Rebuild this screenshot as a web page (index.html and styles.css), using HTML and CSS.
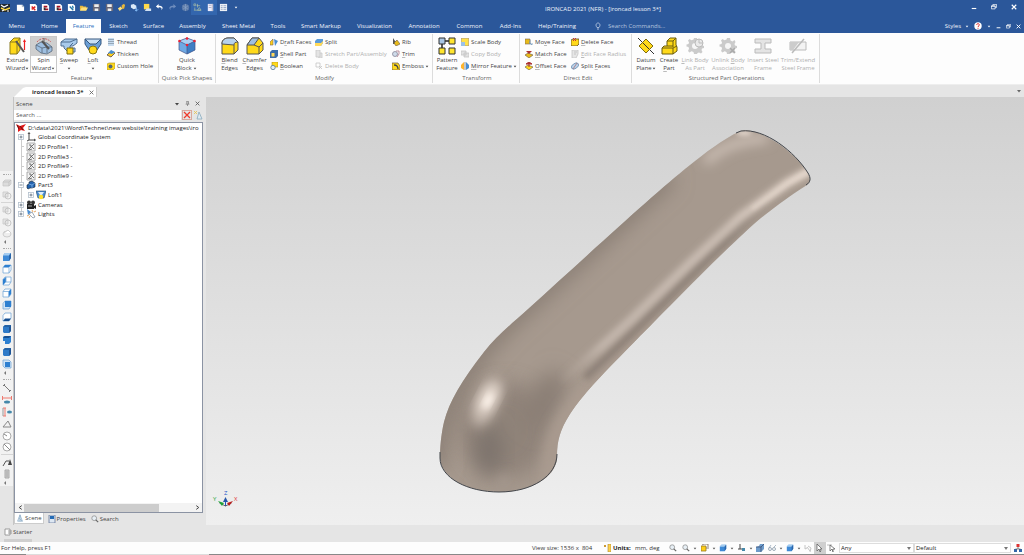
FILE: index.html
```html
<!DOCTYPE html>
<html lang="en">
<head>
<meta charset="utf-8">
<title>IRONCAD 2021 (NFR) - [ironcad lesson 3*]</title>
<link rel="stylesheet" href="styles.css">
</head>
<body>
<svg class="defs" aria-hidden="true">
  <symbol id="page" viewBox="0 0 10 10"><path d="M1 2h6l2 2v5H1z" fill="#fff"/><path d="M7 2v2h2" fill="none" stroke="#9ab"/></symbol>
  <symbol id="page-red" viewBox="0 0 10 10"><path d="M1 1h6l2 2v6H1z" fill="#fff"/><path d="M3 4l4 4M7 4L3 7" stroke="#d22" stroke-width="1.6"/></symbol>
  <symbol id="page-dark" viewBox="0 0 10 10"><path d="M1 1h6l2 2v6H1z" fill="#fff"/><path d="M3 3h4v2H3zM4 6h4v2H4z" fill="#a12"/><path d="M3 5h2v3H3z" fill="#333"/></symbol>
  <symbol id="page-blue" viewBox="0 0 10 10"><path d="M1 1h6l2 2v6H1z" fill="#fff"/><path d="M3 4l4 4M6 3l1 3" stroke="#27a" stroke-width="1.5"/></symbol>
  <symbol id="folder" viewBox="0 0 10 10"><path d="M1 3h3l1 1h3v4H1z" fill="#e8b73a"/><path d="M3 5h7L8 8.500H1z" fill="#ffe07a"/></symbol>
  <symbol id="disk" viewBox="0 0 10 10"><path d="M1 1h8v8H1z" fill="#667"/><path d="M2.500 1.500h5v3h-5zM3 6h4v3H3z" fill="#eee"/></symbol>
  <symbol id="cube-s" viewBox="0 0 10 10"><path d="M1 3.500L3 1h6v5L7 9H1z" fill="#3f8ad6"/><path d="M1 3.500L3 1h6L7 3.500z" fill="#a5ccf0"/><path d="M7 3.500L9 1v5L7 9z" fill="#2a66aa"/></symbol>
  <symbol id="cube-iso" viewBox="0 0 10 10"><path d="M1 3L3 1h6v6L7 9H2L1 8z" fill="#2f7ac8"/><path d="M1 3L3 1h6L7 3z" fill="#2462a6"/><path d="M7 3L9 1v6L7 9z" fill="#1f5596"/></symbol>
  <symbol id="cube-top" viewBox="0 0 10 10"><path d="M1 3.500L3 1h6v5L7 9H1z" fill="#fff" stroke="#79a9d8" stroke-width=".8"/><path d="M1 3.500L3 1h6L7 3.500z" fill="#2d7fd0"/><path d="M7 3.500V9" stroke="#79a9d8" stroke-width=".8"/></symbol>
  <symbol id="cube-left" viewBox="0 0 10 10"><path d="M1 3.500L3 1h6v5L7 9H1z" fill="#fff" stroke="#79a9d8" stroke-width=".8"/><path d="M1 3.500L4 1v5L1 9z" fill="#2d7fd0"/><path d="M4 1v5h5" fill="none" stroke="#79a9d8" stroke-width=".8"/></symbol>
  <symbol id="cube-right" viewBox="0 0 10 10"><path d="M1 3.500L3 1h6v5L7 9H1z" fill="#fff" stroke="#79a9d8" stroke-width=".8"/><path d="M6.500 3.500L9 1v5L6.500 9z" fill="#2d7fd0"/><path d="M1 3.500h6" stroke="#79a9d8" stroke-width=".8"/></symbol>
  <symbol id="cube-back" viewBox="0 0 10 10"><path d="M1 3.500L3 1h6v5L7 9H1z" fill="#cfe3f6" stroke="#79a9d8" stroke-width=".8"/><path d="M3 1h6v6H3z" fill="#2d7fd0"/></symbol>
  <symbol id="cube-bottom" viewBox="0 0 10 10"><path d="M1 3.500L3 1h6v5L7 9H1z" fill="#fff" stroke="#79a9d8" stroke-width=".8"/><path d="M1 9l2-2.500h6L7 9z" fill="#174f91"/></symbol>
  <symbol id="cube-grey" viewBox="0 0 10 10"><path d="M1 4l2-2h6v4L7 8H1z" fill="#dcdcdc" stroke="#c4c4c4" stroke-width=".7"/><path d="M1 4h6v4M7 4l2-2" fill="none" stroke="#bbb" stroke-width=".7"/></symbol>
  <symbol id="rings" viewBox="0 0 10 10"><path d="M1 2h5v5H1z" fill="#e4e4e4" stroke="#c8c8c8" stroke-width=".8"/><circle cx="6" cy="6" r="3" fill="none" stroke="#bdbdbd" stroke-width=".8"/></symbol>
  <symbol id="cyl-grey" viewBox="0 0 10 10"><ellipse cx="5" cy="6" rx="4" ry="3" fill="#eee" stroke="#c4c4c4" stroke-width=".8"/><path d="M2 5l4-3 3 3" fill="#fff" stroke="#c4c4c4" stroke-width=".8"/></symbol>
  <symbol id="down" viewBox="0 0 6 4"><path d="M1 1h4L3 3.500z" fill="currentColor"/></symbol>
  <symbol id="profile" viewBox="0 0 10 10"><path d="M1 1h8v8H1z" fill="#f2f2f2" stroke="#999" stroke-width=".8"/><path d="M2 8l6-6M3 3h2v2M6 7l-3 1M6 5l2 2" fill="none" stroke="#555" stroke-width=".8"/></symbol>
  <symbol id="plus" viewBox="0 0 6 6"><rect x=".5" y=".5" width="5" height="5" fill="#fff" stroke="#b4c0cc" stroke-width=".8"/><path d="M1.500 3h3M3 1.500v3" stroke="#567" stroke-width=".8"/></symbol>
  <symbol id="minus" viewBox="0 0 6 6"><rect x=".5" y=".5" width="5" height="5" fill="#fff" stroke="#b4c0cc" stroke-width=".8"/><path d="M1.500 3h3" stroke="#567" stroke-width=".8"/></symbol>
  <symbol id="lens" viewBox="0 0 10 10"><circle cx="4" cy="4" r="3" fill="#e7eff5" stroke="#888" stroke-width=".9"/><path d="M6 6l3 3" stroke="#666" stroke-width="1.500"/></symbol>
  <symbol id="cone" viewBox="0 0 10 10"><path d="M5 1L2 9h6z" fill="#dfeaf3" stroke="#7ea2c0" stroke-width=".8"/><path d="M5 1v8M3.500 5L8 9" stroke="#7ea2c0" stroke-width=".7"/></symbol>
  <symbol id="gear" viewBox="0 0 18 18"><path d="M9 1l2 0 .5 2.500 2 1 2-1.500 1 2-1 2 .5 1.500 2 .5v2l-2 .5-.5 1.500 1 2-1.500 1.500-2-1-1.500.5L11 17H8l-.5-2-2-.8-2 1.300L2 14l1-2.300L2.500 10 .500 9.500v-2L2.500 7 3 5.500 2 3.500 3.500 2l2 1.200L7.500 2.500 8 1z" fill="#cbcbcb"/><circle cx="9" cy="9" r="3" fill="#f6f6f6"/></symbol>
  <symbol id="restore" viewBox="0 0 8 8"><path d="M2.500 2.500v-2h5v4h-2M.500 2.500h5v4h-5z" fill="none" stroke="#fff"/><path d="M0 3h6" stroke="#fff"/></symbol>
</svg>

<header class="top">
  <div class="titlebar">
    <svg class="i10 logo" viewBox="0 0 10 10"><path d="M0 1h10v8H0z" fill="#202830"/><path d="M1 5l4 2 5-2" stroke="#ffda44" stroke-width="1.500" fill="none"/><path d="M1 2l3 2 4-2M2 8l2-1M7 8l2 0" stroke="#fff" stroke-width="1.200" fill="none"/></svg>
    <nav class="quick" aria-label="Quick access">
      <button aria-label="New"><svg class="i10"><use href="#page"/></svg></button>
      <button aria-label="New scene"><svg class="i10"><use href="#page-red"/></svg></button>
      <button aria-label="New drawing"><svg class="i10"><use href="#page-dark"/></svg></button>
      <button aria-label="New part"><svg class="i10"><use href="#page-dark"/></svg></button>
      <button aria-label="New sketch"><svg class="i10"><use href="#page-blue"/></svg></button>
      <button aria-label="Open"><svg class="i10"><use href="#folder"/></svg></button>
      <button aria-label="Save"><svg class="i10"><use href="#disk"/></svg></button>
      <button aria-label="Save all"><svg class="i10"><use href="#disk"/></svg></button>
      <button aria-label="Catalog"><svg class="i10" viewBox="0 0 10 10"><path d="M1 6l3-2 2 2-3 3z" fill="#ffe07a"/><path d="M5 3l2-2 2 1-1 4-2 1z" fill="#e8b73a"/></svg></button>
      <button aria-label="Import"><svg class="i10" viewBox="0 0 10 10"><path d="M1 2l3-1 3 2v3L4 7 1 5z" fill="#dceaf8"/><path d="M7 5v4M5.500 7.500L7 9l2-2" stroke="#8cc4ff" fill="none"/></svg></button>
      <button aria-label="Export"><svg class="i10" viewBox="0 0 10 10"><path d="M1 1h6v6H1z" fill="#ffd94a"/><path d="M4 6h5v3H2z" fill="#cfe0f2"/></svg></button>
      <button aria-label="Undo"><svg class="i10" viewBox="0 0 10 10"><path d="M4 1L1 4l3 2V4.700c3-.2 4 .8 3 3.300 3-3 1-5-3-5z" fill="#fff"/></svg></button>
      <button aria-label="Redo"><svg class="i10" viewBox="0 0 10 10"><path d="M6 1l3 3-3 2V4.700c-3-.2-4 .8-3 3.300-3-3-1-5 3-5z" fill="#6f8dbd"/></svg></button>
      <button aria-label="Render"><svg class="i10" viewBox="0 0 10 10"><circle cx="5" cy="5" r="4" fill="#5d7ba9"/><path d="M2 3l6 4M8 3L2 7M5 1v8" stroke="#8da4c8" stroke-width=".7"/></svg></button>
      <button class="lit" aria-label="Browser"><svg class="i10" viewBox="0 0 10 10"><path d="M1 1h2v2H1zM5 1v4M4 3h4M2 5v3M1 8h8M7 5l2 3H5z" stroke="#b5c7a8" stroke-width=".7" fill="none"/></svg></button>
      <button class="lit" aria-label="Catalog panel"><svg class="i10" viewBox="0 0 10 10"><path d="M2 1h6v8H2z" fill="#eef"/><path d="M3 2.500h3M3 5h3M7 1v8" stroke="#99a" stroke-width=".8"/></svg></button>
      <button aria-label="Properties panel"><svg class="i10" viewBox="0 0 10 10"><path d="M1 1h8v8H1z" fill="#eef1f6"/><path d="M2 3h2M5 3h3M2 5h2M5 5h3M2 7h2M5 7h3" stroke="#7a93b8" stroke-width=".8"/></svg></button>
      <button aria-label="Customize"><svg class="i-caret"><use href="#down"/></svg></button>
    </nav>
    <h1>IRONCAD 2021 (NFR) - [ironcad lesson 3*]</h1>
    <div class="winctl">
      <button aria-label="Minimize"><svg class="i6" viewBox="0 0 8 8"><path d="M1 6h6" stroke="#fff" stroke-width="1.500"/></svg></button>
      <button aria-label="Restore"><svg class="i6"><use href="#restore"/></svg></button>
      <button aria-label="Close"><svg class="i6" viewBox="0 0 8 8"><path d="M1 1l6 6M7 1L1 7" stroke="#fff" stroke-width="1.500"/></svg></button>
    </div>
  </div>
  <div class="menurow">
    <nav class="menu" aria-label="Ribbon tabs">
      <button>Menu</button><button>Home</button><button class="active">Feature</button><button>Sketch</button><button>Surface</button><button>Assembly</button><button>Sheet Metal</button><button>Tools</button><button>Smart Markup</button><button>Visualization</button><button>Annotation</button><button>Common</button><button>Add-Ins</button><button>Help/Training</button>
    </nav>
    <label class="cmdsearch"><svg class="i8" viewBox="0 0 8 8"><path d="M3 5.500C1 3 2.500 1 4 1s3 2 1 4.500zM3 7h2" fill="none" stroke="#c3d0e6" stroke-width=".8"/></svg><input type="text" placeholder="Search Commands..." aria-label="Search Commands"></label>
    <div class="docctl">
      <button class="styles">Styles <svg class="i-caret"><use href="#down"/></svg></button>
      <button aria-label="Help"><svg class="i8" viewBox="0 0 8 8"><circle cx="4" cy="4" r="3.700" fill="#fff"/><path d="M2.700 3c0-2 2.800-1.700 2.600 0C5.200 4 4 4 4 5M4 5.800v1" stroke="#d33" fill="none"/></svg></button>
      <button aria-label="Help options"><svg class="i-caret"><use href="#down"/></svg></button>
      <button aria-label="Minimize document"><svg class="i5" viewBox="0 0 8 8"><path d="M1 6h6" stroke="#fff" stroke-width="1.500"/></svg></button>
      <button aria-label="Restore document"><svg class="i5"><use href="#restore"/></svg></button>
      <button aria-label="Close document"><svg class="i5" viewBox="0 0 8 8"><path d="M1 1l6 6M7 1L1 7" stroke="#fff" stroke-width="1.500"/></svg></button>
    </div>
  </div>
</header>

<section class="ribbon" aria-label="Feature ribbon">
  <div class="group g-feature">
    <div class="tools">
      <button class="big w25"><svg class="i18" viewBox="0 0 18 18"><path d="M1 5l4-4h6v12l-3 4H1z" fill="#ffd91a" stroke="#8b7a20"/><path d="M1 5h7v12M8 5l3-4" fill="none" stroke="#8b7a20"/><path d="M7 4l8 11" stroke="#555" stroke-width="2"/><path d="M15.500 3v10" stroke="#e22" stroke-width="1.200"/><path d="M14 5l1.500-3L17 5z" fill="#e22"/></svg><span>Extrude</span><span>Wizard<svg class="i-caret"><use href="#down"/></svg></span></button>
      <button class="big w27 selected"><svg class="i18" viewBox="0 0 18 18"><path d="M1 8l5-3 6 1 5 4v4l-5 3-6-1-5-4z" fill="#9ebfe0" stroke="#567" stroke-width=".8"/><path d="M1 8l6 3 5-1 5 0M7 11v5M12 10v6" fill="none" stroke="#567" stroke-width=".8"/><path d="M7 4l7 8" stroke="#555" stroke-width="2"/><path d="M2 5c3-4 9-5 14 0" stroke="#c66" fill="none" stroke-dasharray="2 1"/><path d="M9 1v4" stroke="#666"/></svg><span>Spin</span><span>Wizard<svg class="i-caret"><use href="#down"/></svg></span></button>
      <button class="big w24"><svg class="i18" viewBox="0 0 18 18"><path d="M1 5l4-3h12v4l-4 3h-3v2h5v4H8l-4-4V9H1z" fill="#a9cbec" stroke="#4f6f92"/><path d="M1 5h9l7-3M10 9l3-3" fill="none" stroke="#4f6f92"/><path d="M7 11h6v6H7z" fill="#ffd91a" stroke="#7a6a10"/></svg><span><u>S</u>weep</span><span><svg class="i-caret"><use href="#down"/></svg></span></button>
      <button class="big w24"><svg class="i18" viewBox="0 0 18 18"><path d="M1 2l5 4h6l5-4v5l-4 6H5L1 7z" fill="#6b9fd6" stroke="#35577e"/><path d="M1 2h16l-5 5H6z" fill="#c8dff5" stroke="#35577e"/><circle cx="9" cy="13" r="4" fill="#ffd91a" stroke="#8b7910"/></svg><span><u>L</u>oft</span><span><svg class="i-caret"><use href="#down"/></svg></span></button>
      <div class="col c-f">
        <button><svg class="i8" viewBox="0 0 8 8"><path d="M1 0h6v8H1z" fill="#c7dcf0"/><path d="M1 1.500h6M1 3.500h6M1 5.500h6" stroke="#89a" stroke-width=".8"/></svg>Thread</button>
        <button><svg class="i8" viewBox="0 0 8 8"><path d="M0 5l4-4 4 2-4 4z" fill="#ffcf1a" stroke="#765"/><path d="M1 3l3-3 4 2-3 2z" fill="#4a8ed2"/></svg>Thicken</button>
        <button><svg class="i8" viewBox="0 0 8 8"><path d="M0 2l2-1h6v5L6 8H0z" fill="#ffd91a" stroke="#a88d20" stroke-width=".6"/><circle cx="3.500" cy="4.500" r="2" fill="#567"/></svg>Custom Hole</button>
      </div>
    </div>
    <h2>Feature</h2>
  </div>
  <div class="group g-quick">
    <div class="tools mid">
      <button class="big w27"><svg class="i18" viewBox="0 0 18 18"><path d="M1 4l8-3 8 3v9l-8 4-8-4z" fill="#6ea9e4"/><path d="M1 4l8 4 8-4-8-3z" fill="#a9cff3"/><path d="M9 8v9l8-4V4z" fill="#3f7ec4"/><path d="M1 4l8 4 8-4M9 8v9M1 4v9l8 4 8-4V4L9 1z" fill="none" stroke="#458" stroke-width=".7"/><g fill="#e23"><circle cx="1.500" cy="4" r="1.300"/><circle cx="16.500" cy="4" r="1.300"/><circle cx="9" cy="8" r="1.300"/><circle cx="9" cy="1.500" r="1.300"/></g></svg><span>Quick</span><span>Block <svg class="i-caret"><use href="#down"/></svg></span></button>
    </div>
    <h2>Quick Pick Shapes</h2>
  </div>
  <div class="group g-modify">
    <div class="tools">
      <button class="big w25"><svg class="i18" viewBox="0 0 18 18"><path d="M1 6c0-3 3-5 6-5h6l4 4v8l-4 4H1z" fill="#ffd91a" stroke="#555"/><path d="M1 7c0-4 3-6 6-6h6l4 4c-3 0-4 1-4 3z" fill="#b7d2ee" stroke="#555"/><path d="M13 8v9" stroke="#555"/></svg><span><u>B</u>lend</span><span>Edges</span></button>
      <button class="big w25"><svg class="i18" viewBox="0 0 18 18"><path d="M1 8l5-7h7l4 5v7l-4 4H1z" fill="#ffd91a" stroke="#555"/><path d="M1 8l5-7h7l-5 7z" fill="#9fc0e2" stroke="#555"/><path d="M8 8l5 2v7M13 10l4-4" fill="none" stroke="#555"/></svg><span><u>C</u>hamfer</span><span>Edges</span></button>
      <div class="col c-m1">
        <button><svg class="i8" viewBox="0 0 8 8"><path d="M0 4l3-3v6H0z" fill="#ffcf1a" stroke="#765" stroke-width=".6"/><path d="M4 1l4 2-3 5z" fill="#4a8ed2"/></svg>D<u>r</u>aft Faces</button>
        <button><svg class="i8" viewBox="0 0 8 8"><path d="M0 2l2-2h6v6L6 8H0z" fill="#3c6da8"/><path d="M1.500 3h3v3.500h-3z" fill="#ffd95a"/></svg><u>S</u>hell Part</button>
        <button><svg class="i8" viewBox="0 0 8 8"><path d="M2 0h6v5H2z" fill="#ffd91a" stroke="#a88d20" stroke-width=".6"/><circle cx="3" cy="5.500" r="2.200" fill="#dcecfa" stroke="#579" stroke-width=".8"/></svg><u>B</u>oolean</button>
      </div>
      <div class="col c-m2">
        <button><svg class="i8" viewBox="0 0 8 8"><path d="M0 3l2-2h6v4L6 8H0z" fill="#5c9bd8"/><path d="M0 5h6l2-2v2L6 8H0z" fill="#ffd95a"/></svg>Split</button>
        <button disabled><svg class="i8" viewBox="0 0 8 8"><path d="M1 0h4v7H1zM5 3h2v5H3" fill="#e4e4e4" stroke="#c8c8c8" stroke-width=".8"/></svg>Stretch Part/Assembly</button>
        <button disabled><svg class="i8" viewBox="0 0 8 8"><path d="M1 1h4v4H1zM4 4l3 3M7 4L4 7" fill="none" stroke="#c4c4c4" stroke-width=".8"/></svg>Delete Body</button>
      </div>
      <div class="col c-m3">
        <button><svg class="i8" viewBox="0 0 8 8"><path d="M1 0v6h6L3 3z" fill="#555"/><path d="M2 5l3-3 3 4-4 2z" fill="#e8bb1a" stroke="#654" stroke-width=".6"/></svg>Rib</button>
        <button><svg class="i8" viewBox="0 0 8 8"><circle cx="3" cy="4" r="2.500" fill="#cfdcea" stroke="#889" stroke-width=".8"/><path d="M4 1h3v3L5 7" fill="none" stroke="#a78" stroke-width=".8"/></svg><u>T</u>rim</button>
        <button><svg class="i8" viewBox="0 0 8 8"><path d="M0 1h6l2 3v4H0z" fill="#ffd91a" stroke="#654" stroke-width=".7"/><path d="M2 3c3 0 4 2 4 4" stroke="#444" fill="none" stroke-width="1.300"/></svg><u>E</u>mboss <svg class="i-caret"><use href="#down"/></svg></button>
      </div>
    </div>
    <h2>Modify</h2>
  </div>
  <div class="group g-transform">
    <div class="tools">
      <button class="big w24"><svg class="i18" viewBox="0 0 18 18"><path d="M4 4h10M4 4v10" stroke="#222" stroke-width="1.500"/><path d="M1 1h6v6H1z" fill="#a9c6e4" stroke="#333"/><path d="M11 1h6v6h-6zM1 11h6v6H1zM11 11h6v6h-6z" fill="#ffe52e" stroke="#333"/></svg><span>Pattern</span><span>Feature</span></button>
      <div class="col c-t">
        <button><svg class="i8" viewBox="0 0 8 8"><path d="M0 0h8v8H0z" fill="#ffe14a" stroke="#a98"/><path d="M0 4h4v4H0z" fill="#9cc2e6"/></svg>Scale Body</button>
        <button disabled><svg class="i8" viewBox="0 0 8 8"><path d="M0 1h5v4H0zM3 3h5v4H3z" fill="#e2e2e2" stroke="#c4c4c4" stroke-width=".8"/></svg>Copy Body</button>
        <button><svg class="i8" viewBox="0 0 8 8"><path d="M3 0v8L0 6V3z" fill="#ffb52e"/><path d="M5 0v8l3-2V3z" fill="#4a8ed2"/><path d="M4 0v8" stroke="#567" stroke-width=".7"/></svg><u>M</u>irror Feature <svg class="i-caret"><use href="#down"/></svg></button>
      </div>
    </div>
    <h2>Transform</h2>
  </div>
  <div class="group g-direct">
    <div class="tools">
      <div class="col c-d1">
        <button><svg class="i8" viewBox="0 0 8 8"><path d="M0 1h5v5H0z" fill="#e8bb1a" stroke="#765" stroke-width=".6"/><path d="M4 4l3 3M5 2v4h3" stroke="#79b" fill="none" stroke-width=".8"/></svg>Mo<u>v</u>e Face</button>
        <button><svg class="i8" viewBox="0 0 8 8"><path d="M0 5l3-2 5 2-4 3z" fill="#e8bb1a" stroke="#654" stroke-width=".6"/><path d="M1 1h6L4 4z" fill="#a33"/></svg><u>M</u>atch Face</button>
        <button><svg class="i8" viewBox="0 0 8 8"><path d="M0 5l3-2 5 2-4 3z" fill="#ffd91a" stroke="#654" stroke-width=".6"/><path d="M1 2h6L4 0zM4 2v3" fill="#a33" stroke="#a33"/></svg><u>O</u>ffset Face</button>
      </div>
      <div class="col c-d2">
        <button><svg class="i8" viewBox="0 0 8 8"><path d="M0 2l2-1h6v5L6 8H0z" fill="#ffd91a" stroke="#543" stroke-width=".8"/><path d="M2 0l3 3M5 0L2 3" stroke="#c33"/></svg><u>D</u>elete Face</button>
        <button disabled><svg class="i8" viewBox="0 0 8 8"><path d="M1 0h6v4L5 8H1z" fill="#e6e6e6" stroke="#c4c4c4" stroke-width=".8"/><path d="M3 2h3M3 4h2" stroke="#bbb" stroke-width=".8"/></svg><u>E</u>dit Face Radius</button>
        <button><svg class="i8" viewBox="0 0 8 8"><ellipse cx="4" cy="4" rx="4" ry="2.500" transform="rotate(-35 4 4)" fill="#b9d2ea" stroke="#68a" stroke-width=".7"/><path d="M2 7l4-6" stroke="#a66" stroke-width=".7"/></svg>Split <u>F</u>aces</button>
      </div>
    </div>
    <h2>Direct Edit</h2>
  </div>
  <div class="group g-struct">
    <div class="tools">
      <button class="big w24"><svg class="i18" viewBox="0 0 18 18"><path d="M1 1l16 16" stroke="#333"/><path d="M9 2l7 7-7 7-7-7z" fill="#ffd91a" stroke="#7d6b10"/><path d="M6 6l6 6" stroke="#333"/></svg><span>Datum</span><span>Plane<svg class="i-caret"><use href="#down"/></svg></span></button>
      <button class="big w22"><svg class="i18" viewBox="0 0 18 18"><path d="M2 11l2-2h3V4l3-3h6v7l1 2v4l-4 3H2z" fill="#ffd91a" stroke="#6b5d10"/><path d="M7 4h6l3-3M13 4v6M2 11h11v6M13 11l4-2M7 9h6" fill="none" stroke="#6b5d10"/></svg><span>Create</span><span><u>P</u>art</span></button>
      <button class="big w30" disabled><svg class="i18" viewBox="0 0 18 18"><use href="#gear"/><circle cx="13" cy="6" r="4" fill="#e9e9e9" stroke="#bbb"/><path d="M13 2v4h4" stroke="#bbb" fill="none"/></svg><span><u>L</u>ink Body</span><span>As Part</span></button>
      <button class="big w36" disabled><svg class="i18" viewBox="0 0 18 18"><use href="#gear"/><path d="M11 11l5 5M16 11l-5 5" stroke="#aaa" stroke-width="1.500"/></svg><span>Unlink <u>B</u>ody</span><span>Association</span></button>
      <button class="big w34" disabled><svg class="i18" viewBox="0 0 18 18"><path d="M1 2h16v4h-6v6h6v4H1v-4h6V6H1z" fill="#e4e4e4" stroke="#bbb"/></svg><span>Insert Steel</span><span>Frame</span></button>
      <button class="big w36" disabled><svg class="i18" viewBox="0 0 18 18"><path d="M1 5h16v8H1z" fill="#f3f3f3" stroke="#bbb"/><path d="M1 5h9l-6 8H1z" fill="#ccc"/><path d="M3 16L15 2" stroke="#bbb" stroke-width="1.500"/></svg><span>Trim/Extend</span><span>Steel Frame</span></button>
    </div>
    <h2>Structured Part Operations</h2>
  </div>
</section>

<div class="doctabs">
  <svg class="slant" viewBox="0 0 12 11" preserveAspectRatio="none"><path d="M12 0v11H0L9 1z" fill="#fff"/></svg>
  <div class="doctab"><b>ironcad lesson 3*</b><button aria-label="Close tab"><svg class="i5" viewBox="0 0 8 8"><path d="M1 1l6 6M7 1L1 7" stroke="#666" stroke-width="1.400"/></svg></button></div>
  <button class="tablist" aria-label="Tab list"><svg class="i-caret big-caret"><use href="#down"/></svg></button>
</div>

<main class="work">
  <aside class="side">
    <div class="sidebox">
      <i class="dots"></i>
      <button aria-label="Intersect"><svg class="i10"><use href="#cube-grey"/></svg></button>
      <button aria-label="Combine"><svg class="i10"><use href="#rings"/></svg></button>
      <hr>
      <button aria-label="Union"><svg class="i10"><use href="#rings"/></svg></button>
      <button aria-label="Subtract"><svg class="i10"><use href="#rings"/></svg></button>
      <button aria-label="Surface"><svg class="i10"><use href="#cyl-grey"/></svg></button>
      <i class="more"></i>
      <i class="dots"></i>
      <button aria-label="Front view"><svg class="i10"><use href="#cube-s"/></svg></button>
      <button aria-label="Top view"><svg class="i10"><use href="#cube-top"/></svg></button>
      <button aria-label="Left view"><svg class="i10"><use href="#cube-left"/></svg></button>
      <button aria-label="Right view"><svg class="i10"><use href="#cube-right"/></svg></button>
      <button aria-label="Back view"><svg class="i10"><use href="#cube-back"/></svg></button>
      <button aria-label="Bottom view"><svg class="i10"><use href="#cube-bottom"/></svg></button>
      <button aria-label="Isometric 1"><svg class="i10"><use href="#cube-iso"/></svg></button>
      <button aria-label="Isometric 2"><svg class="i10" viewBox="0 0 10 10"><path d="M1 2l2-1h6v6L7 9H3V6H1z" fill="#2d7fd0"/><path d="M1 2l2-1h6L7 3H2z" fill="#174f91"/></svg></button>
      <button aria-label="Isometric 3"><svg class="i10"><use href="#cube-iso"/></svg></button>
      <button aria-label="Isometric 4"><svg class="i10" viewBox="0 0 10 10"><path d="M1 1h6l2 2v6H3L1 7z" fill="#cfe3f6" stroke="#79a9d8" stroke-width=".8"/><path d="M3 3h5v5H3z" fill="#2d7fd0"/></svg></button>
      <i class="more"></i>
      <i class="dots"></i>
      <button aria-label="Smart dimension"><svg class="i10" viewBox="0 0 10 10"><path d="M2 2l6 6M1 3l2-2M7 9l2-2" stroke="#777"/></svg></button>
      <button aria-label="Horizontal dimension"><svg class="i10" viewBox="0 0 10 10"><path d="M0 3h10M.500 1v4M9.500 1v4" stroke="#ee7a70"/><ellipse cx="5" cy="7" rx="3" ry="1.500" fill="#48a"/></svg></button>
      <button aria-label="Vertical dimension"><svg class="i10" viewBox="0 0 10 10"><path d="M1 1h3M1 9h3M3 1v8" stroke="#ee7a70"/><path d="M1 1v8" stroke="#999"/><ellipse cx="7.500" cy="5" rx="2.500" ry="1.500" fill="#48a"/></svg></button>
      <button aria-label="Angle dimension"><svg class="i10" viewBox="0 0 10 10"><path d="M1 8l5-6 3 6z" fill="none" stroke="#888"/></svg></button>
      <button aria-label="Radius dimension"><svg class="i10" viewBox="0 0 10 10"><circle cx="5" cy="5" r="4" fill="#fff" stroke="#aaa"/><path d="M5 5L2 3" stroke="#888"/></svg></button>
      <button aria-label="Diameter dimension"><svg class="i10" viewBox="0 0 10 10"><circle cx="5" cy="5" r="4" fill="#fff" stroke="#aaa"/><path d="M2 2l6 6" stroke="#888"/></svg></button>
      <hr>
      <button aria-label="Leader text"><svg class="i10" viewBox="0 0 10 10"><path d="M1 9l3-5h3" fill="none" stroke="#555"/><path d="M6 8l2-6 2 6z" fill="#444"/></svg></button>
      <button aria-label="Ruler"><svg class="i10" viewBox="0 0 10 10"><path d="M3 1h4v8H3z" fill="#ccc" stroke="#aaa"/><path d="M4 3h2M4 5h2M4 7h2" stroke="#999" stroke-width=".7"/></svg></button>
      <i class="more"></i>
    </div>
  </aside>

  <section class="panel" aria-label="Scene browser">
    <div class="panelhead"><h2>Scene</h2>
      <button aria-label="Panel menu"><svg class="i-caret big-caret"><use href="#down"/></svg></button>
      <button aria-label="Pin"><svg class="i5" viewBox="0 0 8 8"><path d="M2 1h4M3 1v4M5.500 1v4M1 5h6M4 5v3" stroke="#666"/></svg></button>
      <button aria-label="Close panel"><svg class="i5" viewBox="0 0 8 8"><path d="M1 1l6 6M7 1L1 7" stroke="#555" stroke-width="1.300"/></svg></button>
    </div>
    <div class="searchrow">
      <input type="text" placeholder="Search ..." aria-label="Search scene">
      <button class="clear" aria-label="Clear"><svg class="i8" viewBox="0 0 8 8"><path d="M1 1l6 6M7 1L1 7" stroke="#f03a2a" stroke-width="1.300"/></svg></button>
      <button aria-label="Filter"><svg class="i10" viewBox="0 0 10 10"><path d="M1 1l3 3M4 1L1 4" stroke="#e8c34a" stroke-width=".8"/><path d="M6 2L4 9h5z" fill="#dfeaf3" stroke="#8ab" stroke-width=".8"/></svg></button>
    </div>
    <div class="treebox">
      <ul class="tree">
        <li class="root"><svg class="i10" viewBox="0 0 10 10"><path d="M0 1l4 2 6-2-3 4 2 3-4-1-3 2v-4z" fill="#e01616"/><path d="M4 3l3 4M1 2l2 4" stroke="#411" stroke-width=".8"/></svg><span>D:\data\2021\Word\Technet\new website\training images\iro</span></li>
        <li class="l1"><svg class="i6"><use href="#plus"/></svg><svg class="i10" viewBox="0 0 10 10"><path d="M3 1v7h6M3 8L1 9M2 2l1-1.500L4 2M8 7l1.500 1L8 9" fill="none" stroke="#444"/></svg><span>Global Coordinate System</span></li>
        <li class="l1"><i class="stub"></i><svg class="i10"><use href="#profile"/></svg><span>2D Profile1 -</span></li>
        <li class="l1"><i class="stub"></i><svg class="i10"><use href="#profile"/></svg><span>2D Profile3 -</span></li>
        <li class="l1"><i class="stub"></i><svg class="i10"><use href="#profile"/></svg><span>2D Profile9 -</span></li>
        <li class="l1"><i class="stub"></i><svg class="i10"><use href="#profile"/></svg><span>2D Profile9 -</span></li>
        <li class="l1"><svg class="i6"><use href="#minus"/></svg><svg class="i10" viewBox="0 0 10 10"><path d="M1 5l2-1V2l3-1 3 2v4L6 8H4L2 9 1 8z" fill="#2463ae" stroke="#123" stroke-width=".6"/><path d="M3 4l3 1 3-2M6 5v3" stroke="#9cf" stroke-width=".6" fill="none"/></svg><span>Part3</span></li>
        <li class="l2"><svg class="i6"><use href="#plus"/></svg><svg class="i10" viewBox="0 0 10 10"><path d="M0 1h10L8 8H2z" fill="#4a8ed2" stroke="#246" stroke-width=".6"/><path d="M2 2h6L6 5H4z" fill="#dcecfa"/><circle cx="5" cy="7" r="2.300" fill="#ffe12a"/></svg><span>Loft1</span></li>
        <li class="l1"><svg class="i6"><use href="#plus"/></svg><svg class="i10" viewBox="0 0 10 10"><path d="M1 4h7v5H1zM8 6l2-1v4L8 8z" fill="#222"/><circle cx="3" cy="2.500" r="2" fill="#333"/><circle cx="7" cy="2.500" r="2" fill="#333"/><path d="M2 6h4" stroke="#aaa"/></svg><span>Cameras</span></li>
        <li class="l1"><svg class="i6"><use href="#plus"/></svg><svg class="i10" viewBox="0 0 10 10"><path d="M1 0l4 3-3 3z" fill="#4a8ed2"/><path d="M3 5l3-2 3 5-2 1z" fill="#fff" stroke="#789" stroke-width=".7"/><path d="M6 1l1 2M8 3l2-1M1 7l2-1M3 9l1-2" stroke="#e0903a" stroke-width=".8"/></svg><span>Lights</span></li>
      </ul>
      <div class="hscroll"><button aria-label="Scroll left"><svg class="i5" viewBox="0 0 8 8"><path d="M6 1L2 4l4 3" stroke="#444" stroke-width="1.600" fill="none"/></svg></button><i class="thumb"></i><button aria-label="Scroll right"><svg class="i5" viewBox="0 0 8 8"><path d="M2 1l4 3-4 3" stroke="#444" stroke-width="1.600" fill="none"/></svg></button></div>
    </div>
    <nav class="paneltabs">
      <button class="on"><svg class="i8"><use href="#cone"/></svg>Scene</button>
      <button><svg class="i8" viewBox="0 0 8 8"><path d="M1 0h6v8H1z" fill="#dde7f2" stroke="#679" stroke-width=".8"/><path d="M2 1h4v3H2z" fill="#246bb5"/></svg>Properties</button>
      <button><svg class="i8"><use href="#lens"/></svg>Search</button>
    </nav>
  </section>

  <section class="viewport" aria-label="3D view">
    <svg class="model" viewBox="206 97 818 428" preserveAspectRatio="xMidYMid meet">
      <defs>
        <path id="body" d="M740 131C722 140 705 153 690 165C655 193 600 244 527 310C510 325 496 337 484 352C462 380 449 402 444 422C441 435 440 448 440 457C440 478 468 492 499 492C532 492 557 476 557 457C557 440 560 430 570 414C585 391 612 365 640 336C667 309 696 279 723 253C740 237 755 222 770 211C783 201 797 191 807 185C811 182 811 178 808 173C795 152 765 131 745 130Z"/>
        <clipPath id="clip"><use href="#body"/></clipPath>
        <filter id="b1" x="-50%" y="-50%" width="200%" height="200%"><feGaussianBlur stdDeviation="2"/></filter>
        <filter id="b3" x="-50%" y="-50%" width="200%" height="200%"><feGaussianBlur stdDeviation="3"/></filter>
        <filter id="b5" x="-50%" y="-50%" width="200%" height="200%"><feGaussianBlur stdDeviation="6"/></filter>
        <filter id="b9" x="-50%" y="-50%" width="200%" height="200%"><feGaussianBlur stdDeviation="10"/></filter>
        <linearGradient id="ridge" gradientUnits="userSpaceOnUse" x1="808" y1="172" x2="552" y2="392"><stop offset="0" stop-color="#e4d6cb"/><stop offset=".3" stop-color="#cbbeb4"/><stop offset=".8" stop-color="#c3b6ac"/><stop offset="1" stop-color="#a6998e" stop-opacity="0"/></linearGradient>
        <linearGradient id="under" gradientUnits="userSpaceOnUse" x1="808" y1="182" x2="560" y2="410"><stop offset="0" stop-color="#a6998e" stop-opacity="0"/><stop offset=".3" stop-color="#8c8077"/><stop offset="1" stop-color="#8a7e75"/></linearGradient>
      </defs>
      <use href="#body" fill="#a6998e"/>
      <g clip-path="url(#clip)" fill="none">
        <path d="M670 175L527 305C480 345 440 395 434 470" stroke="#877b72" stroke-width="18" filter="url(#b9)"/>
        <ellipse cx="505" cy="430" rx="45" ry="48" fill="#8a7e75" filter="url(#b9)" opacity=".8"/>
        <ellipse cx="545" cy="400" rx="16" ry="32" transform="rotate(30 545 400)" fill="#8a7e75" filter="url(#b9)"/>
        <ellipse cx="489" cy="450" rx="13" ry="25" fill="#7b726c" filter="url(#b9)"/>
        <path d="M552 500C542 450 556 424 583 395L660 320" stroke="#aa9b90" stroke-width="13" filter="url(#b5)"/>
        <path d="M811 182L763 208L709 257L633 332L585 378" stroke="url(#under)" stroke-width="7" filter="url(#b3)"/>
        <path d="M811 170L787 183L740 217L690 263L633 318L600 348L563 380" stroke="url(#ridge)" stroke-width="9" filter="url(#b3)"/>
        <path d="M809 171L787 184L752 209" stroke="#eaddd2" stroke-width="3" filter="url(#b1)" opacity=".7"/>
        <path d="M705 162C722 147 738 140 768 138" stroke="#d2c5bb" stroke-width="8" filter="url(#b5)"/>
        <ellipse cx="744" cy="133" rx="8" ry="3" fill="#ddd0c6" filter="url(#b1)"/>
        <path d="M810 190L770 214L723 256L640 340L590 391" stroke="#ab9b90" stroke-width="3" filter="url(#b1)"/>
        <ellipse cx="487" cy="402" rx="12" ry="27" transform="rotate(25 487 402)" fill="#c0b3a9" filter="url(#b5)"/>
        <ellipse cx="488" cy="399" rx="7" ry="16" transform="rotate(27 488 399)" fill="#f0e4da" filter="url(#b5)"/>
        <ellipse cx="488" cy="401" rx="3" ry="8" transform="rotate(27 488 401)" fill="#fff6ee" filter="url(#b3)"/>
        <ellipse cx="504" cy="486" rx="7" ry="12" fill="#a3968c" filter="url(#b5)"/>
      </g>
      <path d="M440 452V458C440 478 468 492 499 492C532 492 557 476 557 454M736 133L741 131C765 128 795 152 808 173C811 178 811 182 806 185" fill="none" stroke="#43464b" stroke-width="1"/>
      <g>
        <path d="M225.500 506V498" stroke="#2456c8"/><path d="M223 502l2.500-5 2.500 5z" fill="#2456a8"/>
        <path d="M225.500 506l-6-3M225.500 506l6-3" stroke="#444" stroke-width=".8"/>
        <path d="M218 501l6 2-2 3z" fill="#1fa33a"/><path d="M233 501l-6 2 2 3z" fill="#b81d1d"/>
        <text x="224" y="495" class="axis z">Z</text><text x="213" y="501" class="axis y">Y</text><text x="234" y="501" class="axis x">X</text>
      </g>
    </svg>
  </section>
</main>

<div class="starter"><button><svg class="i8" viewBox="0 0 8 8"><path d="M1 1h5v6H1z" fill="#fff" stroke="#888" stroke-width=".8"/><path d="M4 3h4M4 5h4" stroke="#888" stroke-width=".8"/></svg>Starter</button><i class="stub-tab"></i></div>

<footer class="status">
  <span class="help">For Help, press F1</span>
  <span class="viewsize">View size: 1536 x&nbsp; 804</span>
  <span class="units"><svg class="i8" viewBox="0 0 8 8"><path d="M1 1l2 2M3 1L1 3" stroke="#c93"/><path d="M5 0h3v8H5z" fill="#ffd24a" stroke="#a83" stroke-width=".6"/></svg><b>Units:</b></span>
  <span class="mm">mm, deg</span>
  <div class="stools">
    <button aria-label="Zoom window"><svg class="i8"><use href="#lens"/></svg></button>
    <button aria-label="Zoom"><svg class="i8"><use href="#lens"/></svg><svg class="i-caret"><use href="#down"/></svg></button>
    <button aria-label="Camera"><svg class="i8" viewBox="0 0 8 8"><path d="M0 2h5v5H0z" fill="#ffcf1a" stroke="#987a20" stroke-width=".8"/><path d="M5 4h3M1 1l2-1h4v3" stroke="#765" fill="none" stroke-width=".8"/></svg><svg class="i-caret"><use href="#down"/></svg></button>
    <button aria-label="Shading"><svg class="i8"><use href="#cube-s"/></svg><svg class="i-caret"><use href="#down"/></svg></button>
    <button aria-label="Origin"><svg class="i8" viewBox="0 0 8 8"><path d="M2 0v5h5M0 5h2" stroke="#444" fill="none"/><path d="M4 4h3v3H4z" fill="#48a"/></svg><svg class="i-caret"><use href="#down"/></svg></button>
    <button aria-label="Part view"><svg class="i8" viewBox="0 0 8 8"><path d="M0 3l3-1 1-2h4v5L5 8H0z" fill="#6d9bcb"/><path d="M0 3h5v5M5 3l3-3" stroke="#346" fill="none" stroke-width=".7"/></svg></button>
    <button aria-label="Glasses"><svg class="i8" viewBox="0 0 8 8"><path d="M1 4l2-3M6 3l2-2" stroke="#9ab" stroke-width=".8"/><circle cx="2" cy="5" r="1.500" fill="none" stroke="#89a" stroke-width=".8"/><circle cx="6" cy="5" r="1.500" fill="none" stroke="#89a" stroke-width=".8"/></svg><svg class="i-caret"><use href="#down"/></svg></button>
    <button aria-label="Display"><svg class="i8"><use href="#cube-s"/></svg><svg class="i-caret"><use href="#down"/></svg></button>
    <button aria-label="Drag"><svg class="i8" viewBox="0 0 8 8"><path d="M1 1v4l2-1M4 2l3 2-1 4M3 3l3 4" stroke="#c4c4c4" fill="none"/></svg></button>
    <button class="pressed" aria-label="Select"><svg class="i8" viewBox="0 0 8 8"><path d="M2 0v7l2-2 1 3 1-1-1-2h2z" fill="#fff" stroke="#555" stroke-width=".7"/></svg></button>
    <button aria-label="Box select"><svg class="i8" viewBox="0 0 8 8"><path d="M0 1h5" stroke="#bbb"/><path d="M3 1v6l2-2 1 3V5h2z" fill="#fff" stroke="#555" stroke-width=".7"/></svg></button>
  </div>
  <select class="s-any" aria-label="Selection filter"><option>Any</option></select>
  <select class="s-default" aria-label="Configuration"><option>Default</option></select>
  <button class="last" aria-label="Configurations"><svg class="i8" viewBox="0 0 8 8"><path d="M2.500 0h3v3h-3z" fill="#d33"/><path d="M0 5h3v3H0zM5 5h3v3H5z" fill="#36a"/><path d="M4 3v2M1.500 5h5" stroke="#555" stroke-width=".7"/></svg></button>
</footer>
<div class="edge"></div>
</body>
</html>
```
FILE: styles.css
```css
* { box-sizing: border-box; }
body {
  margin: 0;
  height: 100vh;
  display: flex;
  flex-direction: column;
  background: #e5e5e5;
  color: #333;
  font: 6px/8px "Open Sans", "Noto Sans", sans-serif;
  overflow: hidden;
}
button, input, select {
  font: inherit;
  color: inherit;
  background: none;
  border: 0;
  padding: 0;
  margin: 0;
  border-radius: 0;
  outline: 0;
}
button { display: inline-flex; align-items: center; justify-content: center; white-space: nowrap; }
h1, h2 { margin: 0; font: inherit; }
svg { flex: none; display: block; }
u { text-underline-offset: 1px; text-decoration-thickness: 1px; text-decoration-color: #bbb; }
.defs { position: absolute; width: 0; height: 0; }
.i5 { width: 5px; height: 5px; }
.i6 { width: 6px; height: 6px; }
.i8 { width: 8px; height: 8px; }
.i10 { width: 10px; height: 10px; }
.i18 { width: 18px; height: 18px; }
.i-caret { width: 4px; height: 3px; display: inline-block; vertical-align: middle; }
.big-caret { width: 6px; height: 4px; }

.top { background: #2b579a; color: #fff; flex: none; }
.titlebar { height: 19px; display: flex; align-items: flex-start; }
.logo { margin: 3px 4px 0 0; }
.quick { display: flex; width: 228px; height: 15px; }
.quick .i10 { width: 9px; height: 9px; }
.quick button { flex: 1; }
.quick .lit { background: #3366ae; }
.titlebar h1 { flex: 1; padding: 4px 0 0 303px; color: #f0f4fa; white-space: nowrap; line-height: 10px; }
.winctl { display: flex; gap: 14px; padding: 4px 7px 0 0; }
.menurow { height: 14px; display: flex; }
.menu { display: grid; grid-template-columns: 33px 33px 35px 35px 35px 43px 49px 30px 56px 51px 48px 43px 39px 54px; }
.menu button { color: #f0f4fa; }
.menu .active { background: #fff; color: #2b70c0; }
.cmdsearch { display: flex; align-items: center; gap: 6px; padding-left: 10px; flex: 1; }
.cmdsearch input { width: 90px; }
.cmdsearch input::placeholder { color: #b5c4de; opacity: 1; }
.docctl { display: flex; align-items: center; gap: 5px; padding-right: 3px; color: #f0f4fa; }
.styles { gap: 4px; }

.ribbon { background: #fdfdfd; height: 52px; display: flex; flex: none; padding-left: 1px; border-bottom: 1px solid #eee; }
.group { display: flex; flex-direction: column; border-right: 1px solid #dcdcdc; margin: 1px 0; flex: none; }
.group h2 { text-align: center; color: #666; line-height: 10px; white-space: nowrap; }
.g-feature { width: 158px; padding-left: 4px; }
.g-quick { width: 57px; }
.g-modify { width: 217px; padding-left: 1px; }
.g-transform { width: 87px; padding-left: 2px; }
.g-direct { width: 112px; padding-left: 5px; }
.g-struct { width: 188px; padding-left: 2px; }
.tools { display: flex; height: 40px; padding-top: 2px; }
.mid { justify-content: center; }
.big { flex-direction: column; justify-content: flex-start; height: 37px; padding-top: 1px; color: #444; }
.big span { line-height: 8px; display: block; }
.big .i18 { margin-bottom: 1px; }
.big:disabled, .col button:disabled { color: #b0b0b0; }
.selected { background: linear-gradient(#cfcfcf 20px, #fff 20px); outline: 1px solid #c8c8c8; outline-offset: -1px; }
.w22 { width: 22px; } .w24 { width: 24px; } .w25 { width: 25px; } .w27 { width: 27px; }
.w30 { width: 30px; } .w34 { width: 34px; } .w36 { width: 36px; }
.col { display: flex; flex-direction: column; padding-left: 2px; }
.col button { height: 12px; display: block; text-align: left; color: #444; }
.col .i8 { display: inline-block; vertical-align: middle; margin-right: 2px; }
.c-f { width: 53px; }
.c-m1 { width: 47px; padding-left: 3px; }
.c-m2 { width: 76px; padding-left: 1px; }
.c-m3 { width: 42px; }
.c-d1 { width: 45px; padding-left: 0; }
.c-d2 { width: 61px; padding-left: 1px; }

.doctabs { height: 12px; flex: none; display: flex; align-items: flex-end; padding-left: 14px; background: #e5e5e5; }
.slant { width: 12px; height: 10px; }
.doctab { height: 10px; display: flex; align-items: center; gap: 5px; background: #fff; padding: 0 2px 0 6px; color: #333; border-right: 1px solid #d0d0d0; }
.tablist { margin-left: auto; align-self: center; width: 10px; color: #666; }

.work { flex: 1; min-height: 0; display: flex; }
.side { width: 14px; padding-top: 74px; flex: none; border-right: 1px solid #c5c5c5; }
.sidebox { background: #f2f2f2; display: flex; flex-direction: column; align-items: center; height: 315px; }
.sidebox button { flex: 1; min-height: 0; }
.sidebox hr { width: 12px; height: 1px; margin: 1px 0; border: 0; background: #d5d5d5; }
.dots { width: 8px; border-top: 1px dotted #aaa; margin: 3px 0 2px; }
.more { border: 2px solid transparent; border-right-color: #777; border-left: 0; margin: 1px 4px 1px 0; }

.panel { width: 189px; flex: none; display: flex; flex-direction: column; }
.panelhead { height: 13px; display: flex; align-items: center; gap: 5px; padding: 0 3px 0 2px; color: #444; }
.panelhead h2 { flex: 1; }
.searchrow { height: 12px; display: flex; gap: 1px; padding-bottom: 2px; }
.searchrow input { flex: 1; min-width: 0; background: #fff; padding: 0 2px; }
.searchrow input::placeholder { color: #555; opacity: 1; }
.searchrow button { width: 10px; }
.clear { outline: 1px solid #d9a79c; outline-offset: -1px; }
.treebox { flex: 1; min-height: 0; background: #fff; border: 1px solid #8b93a3; display: flex; flex-direction: column; justify-content: space-between; }
.tree { list-style: none; margin: 0; padding: 0 0 0 1px; height: 96px; display: flex; flex-direction: column; background: linear-gradient(#ccc, #ccc) 6px 12px / 1px 78px no-repeat; overflow: hidden; color: #222; }
.tree li { flex: 1; min-height: 0; display: flex; align-items: center; gap: 2px; white-space: nowrap; }
.tree .l1 { padding-left: 2px; }
.tree .l2 { padding-left: 12px; }
.stub { width: 6px; height: 1px; background: linear-gradient(90deg, transparent 3px, #ccc 3px); }
.hscroll { height: 9px; background: #f3f3f3; display: flex; align-items: center; padding: 0 2px; }
.hscroll button { width: 6px; }
.thumb { height: 8px; width: 135px; background: #cdcdcd; margin: 0 auto 0 1px; }
.paneltabs { height: 12px; display: flex; align-items: flex-start; gap: 3px; color: #444; }
.paneltabs button { height: 11px; gap: 1px; padding: 0 1px; }
.paneltabs .on { background: #fff; border: 1px solid #ccc; border-top: 0; }

.viewport { flex: 1; min-width: 0; margin-left: 3px; background: linear-gradient(#d0d0d0, #efefef); }
.model { width: 100%; height: 100%; }
.axis { font-size: 6px; }
.z { fill: #2456c8; } .y { fill: #1fa33a; } .x { fill: #e04040; }

.starter { height: 17px; flex: none; padding-left: 4px; display: flex; flex-direction: column; align-items: flex-start; justify-content: space-between; color: #444; }
.starter button { height: 14px; gap: 1px; }
.stub-tab { width: 28px; height: 3px; background: #cfcfcf; }
.status { height: 12px; flex: none; background: #fdfdfd; display: flex; align-items: center; padding-left: 1px; white-space: nowrap; }
.help { flex: 1; }
.viewsize { width: 71px; }
.units { width: 32px; display: flex; align-items: center; gap: 2px; color: #222; }
.mm { width: 33px; }
.stools { display: grid; grid-template-columns: 13px 19px 18px 19px 18px 12px 18px 18px 11px 12px 13px; height: 12px; color: #555; }
.stools button { justify-content: flex-start; padding-left: 1px; gap: 3px; }
.pressed { background: #cfcfcf; }
.status select { appearance: none; height: 10px; padding: 0 1px; background: #fff url("data:image/svg+xml,%3Csvg xmlns='http://www.w3.org/2000/svg' viewBox='0 0 4 3'%3E%3Cpath d='M0 0h4L2 3z' fill='%23777'/%3E%3C/svg%3E") right 2px center / 4px 3px no-repeat; border: 1px solid #ddd; color: #222; }
.s-any { width: 75px; }
.s-default { width: 97px; }
.last { width: 13px; }
.edge { height: 1px; flex: none; background: linear-gradient(90deg, #888 26px, #ddd 26px, #ddd 209px, #888 209px); }
```
